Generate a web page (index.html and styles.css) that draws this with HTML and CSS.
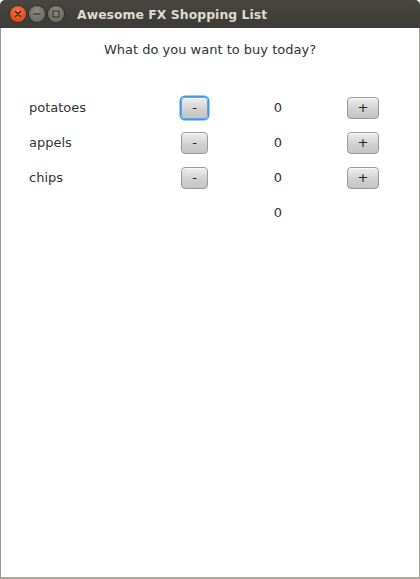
FILE: index.html
```html
<!DOCTYPE html>
<html>
<head>
<meta charset="utf-8">
<link rel="stylesheet" href="styles.css">
</head>
<body>
<div class="window">
  <div class="titlebar">
    <div class="controls">
      <span class="wbtn close"><svg width="16" height="16" viewBox="0 0 16 16"><path d="M5.5 5.5 L10.5 10.5 M10.5 5.5 L5.5 10.5" stroke="#3a1a10" stroke-width="1.4" stroke-linecap="round"/></svg></span>
      <span class="wbtn min"><svg width="16" height="16" viewBox="0 0 16 16"><path d="M4.5 8 H11.5" stroke="#3c3b37" stroke-width="1.4"/></svg></span>
      <span class="wbtn max"><svg width="16" height="16" viewBox="0 0 16 16"><rect x="5" y="5" width="6" height="6" fill="none" stroke="#3c3b37" stroke-width="1.2"/></svg></span>
    </div>
    <div class="title">Awesome FX Shopping List</div>
  </div>
  <div class="content">
    <div class="question">What do you want to buy today?</div>
    <div class="list">
      <div class="label">potatoes</div>
      <div class="cell"><button class="btn minus focused">-</button></div>
      <div class="count">0</div>
      <div class="cell"><button class="btn plus">+</button></div>

      <div class="label">appels</div>
      <div class="cell"><button class="btn minus">-</button></div>
      <div class="count">0</div>
      <div class="cell"><button class="btn plus">+</button></div>

      <div class="label">chips</div>
      <div class="cell"><button class="btn minus">-</button></div>
      <div class="count">0</div>
      <div class="cell"><button class="btn plus">+</button></div>

      <div class="label"></div>
      <div class="cell"></div>
      <div class="count">0</div>
      <div class="cell"></div>
    </div>
  </div>
</div>
</body>
</html>
```
FILE: styles.css
```css
html, body {
  margin: 0;
  padding: 0;
  background: #ffffff;
}
.window {
  width: 420px;
  height: 579px;
  display: flex;
  flex-direction: column;
  box-sizing: border-box;
  font-family: "DejaVu Sans", sans-serif;
}
.titlebar {
  height: 28px;
  flex: none;
  background: linear-gradient(#47463f, #3c3b37);
  border-radius: 5px 5px 0 0;
  display: flex;
  align-items: center;
  padding-left: 10px;
  box-sizing: border-box;
}
.controls {
  display: flex;
  gap: 3px;
}
.wbtn {
  width: 16px;
  height: 16px;
  border-radius: 50%;
  display: flex;
  box-shadow: 0 0 0 1px #2f2e2a;
}
.wbtn svg { display: block; }
.close { background: radial-gradient(circle at 50% 35%, #f47b4d, #df4a16 70%); }
.min, .max { background: radial-gradient(circle at 50% 35%, #8c8a84, #6f6d67 70%); }
.title {
  margin-left: 13px;
  color: #dfdbd2;
  font-family: "DejaVu Sans", sans-serif;
  font-weight: bold;
  font-size: 12.4px;
  letter-spacing: 0.05px;
}
.content {
  flex: 1;
  border-left: 1px solid #9c9a95;
  border-right: 1px solid #9c9a95;
  border-bottom: 2px solid #a9a7a2;
  background: #fff;
  color: #333333;
  font-size: 13px;
}
.question {
  text-align: center;
  padding-top: 13px;
  height: 17px;
  line-height: 17px;
}
.list {
  margin-top: 32px;
  display: grid;
  grid-template-columns: 151px 28px 139px 32px;
  grid-auto-rows: 35px;
  padding-left: 28px;
  align-items: center;
}
.label { line-height: 17px; }
.count { text-align: center; line-height: 17px; padding-left: 1px; }
.cell { display: flex; align-items: center; }
.btn {
  height: 22px;
  padding: 0;
  margin: 0;
  border: 1px solid #9a9a9a;
  border-radius: 4px;
  background: linear-gradient(#eeeeee, #cfcfcf 60%, #c4c4c4);
  color: #222;
  font-family: "DejaVu Sans", sans-serif;
  font-size: 13px;
  line-height: 18px;
  box-shadow: inset 0 1px 0 #fafafa;
}
.minus { width: 28px; margin-left: 1px; }
.plus { width: 32px; }
.focused {
  border-color: #6aa0d8;
  box-shadow: 0 0 0 1.5px #3a9bf0, inset 0 1px 0 #fafafa;
}
```
